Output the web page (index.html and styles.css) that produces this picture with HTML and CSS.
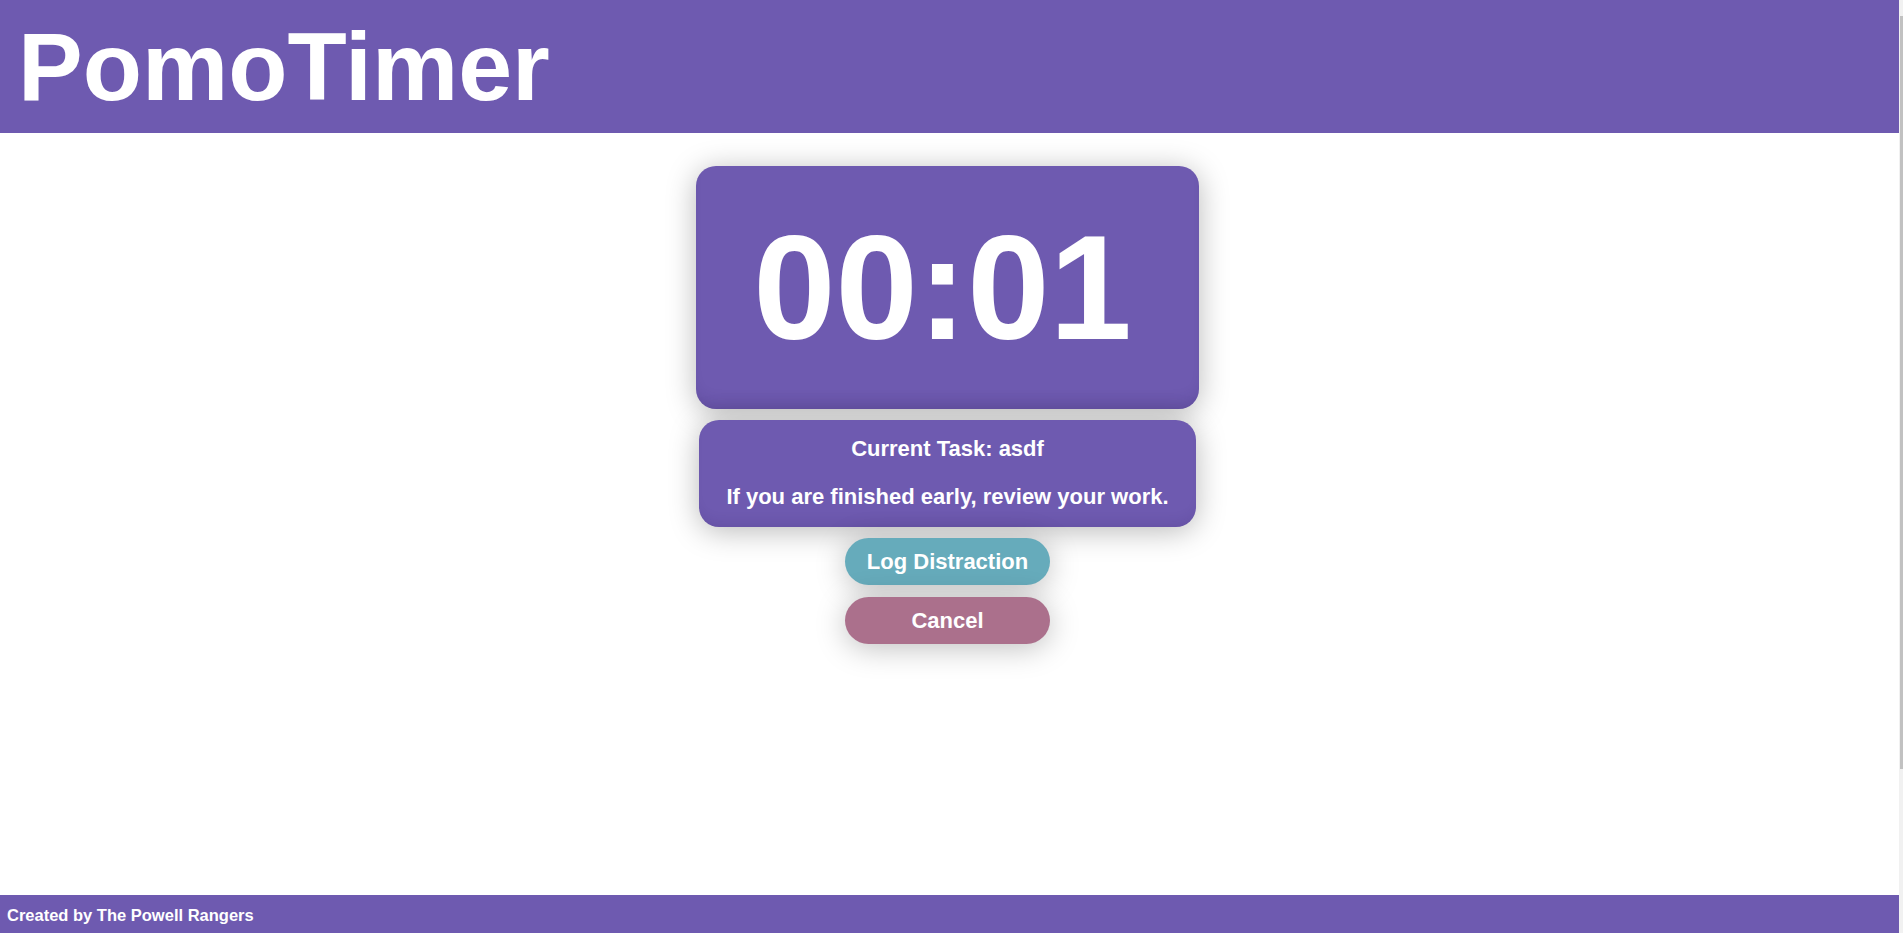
FILE: index.html
```html
<!DOCTYPE html>
<html lang="en">
<head>
<meta charset="utf-8">
<title>PomoTimer</title>
<link rel="stylesheet" href="styles.css">
</head>
<body>
<div class="page">
  <div class="app">
    <header class="site-header">
      <h1 class="brand">PomoTimer</h1>
    </header>
    <main class="main">
      <div class="timer-card">
        <span class="timer-text">00:01</span>
      </div>
      <div class="task-card">
        <p class="task-line">Current Task: asdf</p>
        <p class="task-line">If you are finished early, review your work.</p>
      </div>
      <button class="btn btn-log">Log Distraction</button>
      <button class="btn btn-cancel">Cancel</button>
    </main>
    <footer class="site-footer">Created by The Powell Rangers</footer>
  </div>
  <div class="scrollbar"><div class="scrollbar-thumb"></div></div>
</div>
</body>
</html>
```
FILE: styles.css
```css
html, body {
  margin: 0;
  padding: 0;
  background: #ffffff;
}

body {
  font-family: "Liberation Sans", Arial, sans-serif;
  font-weight: bold;
  color: #ffffff;
}

.page {
  display: flex;
  height: 100vh;
  overflow: hidden;
}

.app {
  flex: 1;
  display: flex;
  flex-direction: column;
  min-width: 0;
}

.site-header {
  height: 133px;
  box-sizing: border-box;
  background: #6e5ab0;
  padding: 11px 0 0 18px;
  flex-shrink: 0;
}

.brand {
  margin: 0;
  font-size: 97px;
  line-height: normal;
  font-weight: bold;
  color: #ffffff;
}

.main {
  flex: 1;
  display: flex;
  flex-direction: column;
  align-items: center;
  padding: 33px 4px 0 0;
  gap: 11px;
}

.timer-card {
  width: 503px;
  height: 243px;
  box-sizing: border-box;
  background: #6e5ab0;
  border-radius: 20px;
  padding-right: 10px;
  display: flex;
  align-items: center;
  justify-content: center;
  box-shadow: 0 4px 30px rgba(0, 0, 0, 0.28), inset 0 -14px 16px -10px rgba(40, 20, 80, 0.18);
}

.timer-text {
  font-size: 148px;
  line-height: normal;
  color: #ffffff;
}

.task-card {
  width: 497px;
  box-sizing: border-box;
  background: #6e5ab0;
  border-radius: 20px;
  padding: 16px 0 18px;
  display: flex;
  flex-direction: column;
  align-items: center;
  gap: 23px;
  box-shadow: 0 4px 30px rgba(0, 0, 0, 0.28), inset 0 -12px 14px -10px rgba(40, 20, 80, 0.15);
}

.task-line {
  margin: 0;
  font-size: 22px;
  line-height: 25px;
  text-align: center;
}

.btn {
  width: 205px;
  height: 47px;
  border: none;
  border-radius: 24px;
  font-family: "Liberation Sans", Arial, sans-serif;
  font-weight: bold;
  font-size: 22px;
  color: #ffffff;
  padding: 0;
  cursor: pointer;
  box-shadow: 0 4px 30px rgba(0, 0, 0, 0.25);
}

.btn-log {
  background: #66abbb;
}

.btn-cancel {
  margin-top: 1px;
  background: #ab708c;
}

.site-footer {
  height: 38px;
  box-sizing: border-box;
  background: #6e5ab0;
  padding: 11px 0 0 7px;
  font-size: 16.5px;
  line-height: normal;
  flex-shrink: 0;
}

.scrollbar {
  width: 4px;
  background: #f1f1f1;
  flex-shrink: 0;
  padding-top: 16px;
  box-sizing: border-box;
  display: flex;
  justify-content: flex-end;
  align-items: flex-start;
}

.scrollbar-thumb {
  width: 3px;
  height: 753px;
  background: #c1c1c1;
}
```
